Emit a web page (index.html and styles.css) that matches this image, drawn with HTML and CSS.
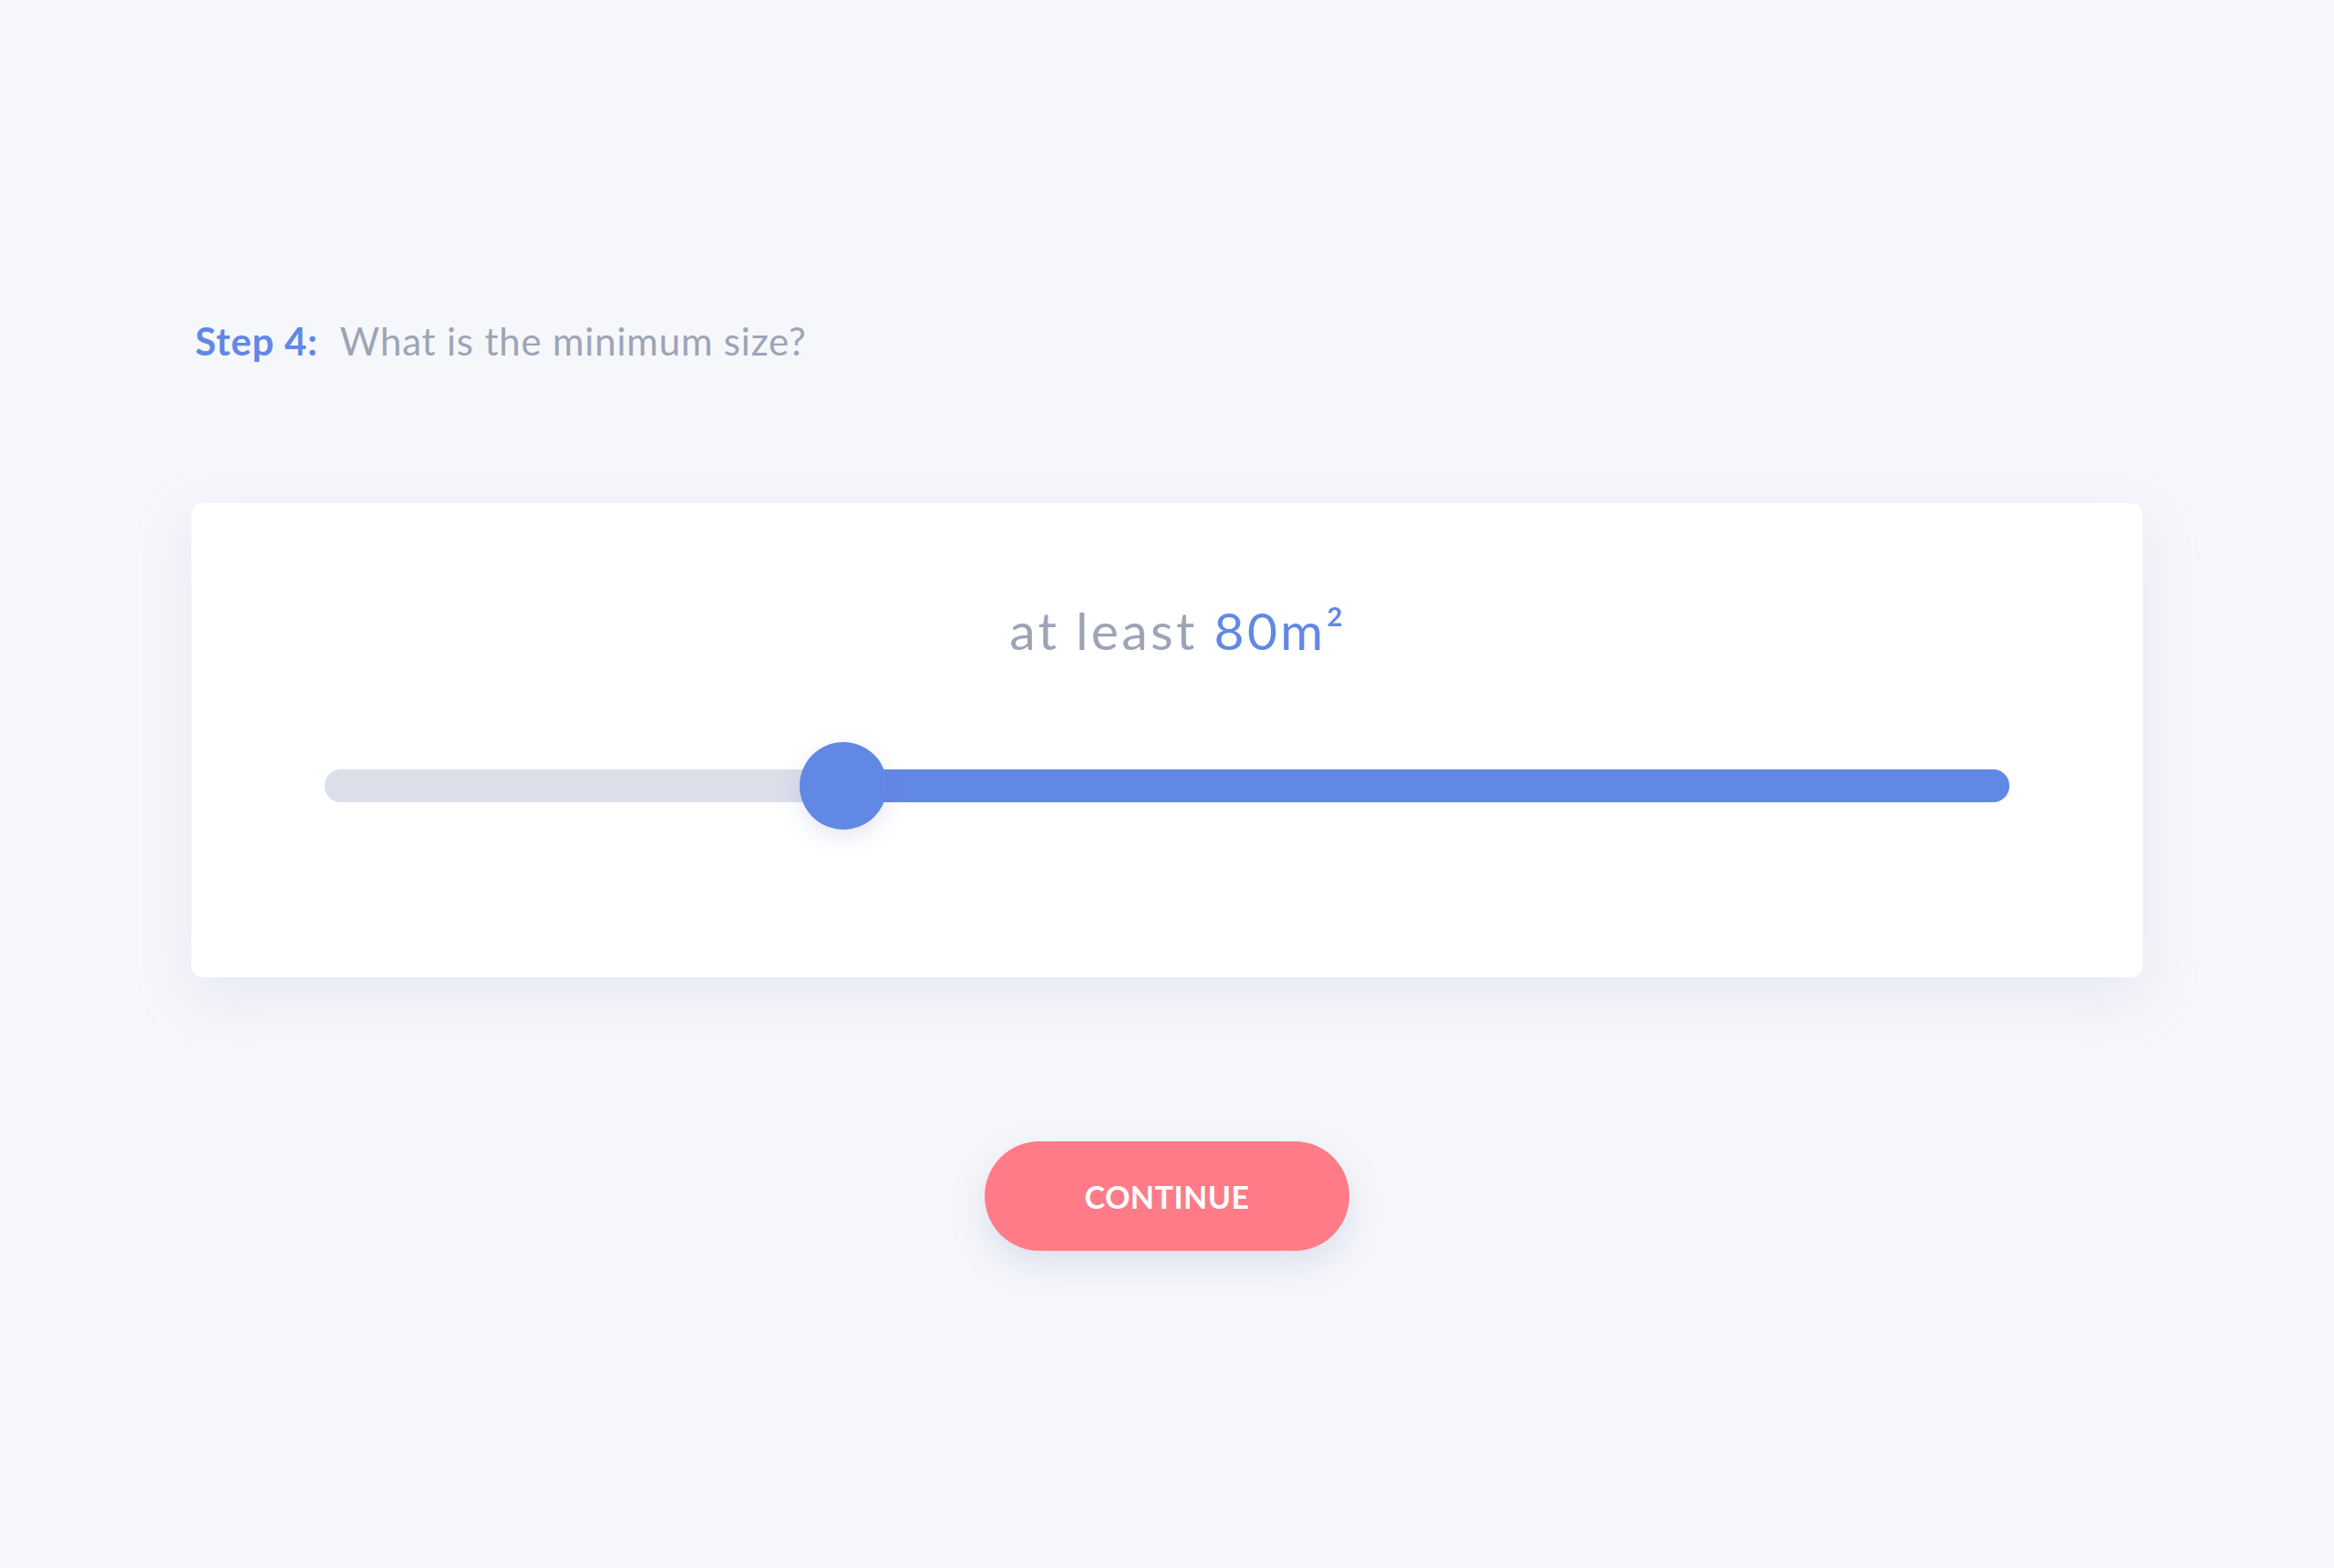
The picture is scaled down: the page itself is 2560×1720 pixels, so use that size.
FILE: index.html
```html
<!DOCTYPE html>
<html lang="en">
<head>
<meta charset="utf-8">
<title>Step 4</title>
<link rel="stylesheet" href="styles.css">
</head>
<body>
<main class="page">
  <h1 class="question"><span class="step">Step 4:</span><span class="prompt">What is the minimum size?</span></h1>
  <section class="card">
    <div class="value">at least <span class="amount">80m²</span></div>
    <div class="slider">
      <div class="track">
        <div class="fill" style="left: 30.8%;"></div>
        <div class="thumb" style="left: 30.8%;"></div>
      </div>
    </div>
  </section>
  <div class="actions">
    <button class="continue" type="button">CONTINUE</button>
  </div>
</main>
</body>
</html>
```
FILE: styles.css
```css
html, body {
  margin: 0;
  padding: 0;
  background: #f6f7fb;
}
body {
  font-family: "Lato", "Open Sans", sans-serif;
  width: 2560px;
  height: 1720px;
}
.page {
  padding: 344px 210px 0 210px;
}
.question {
  margin: 0 0 0 4px;
  font-size: 42px;
  line-height: 60px;
  font-weight: 400;
  letter-spacing: 0.8px;
  display: flex;
  gap: 24px;
}
.step {
  color: #6288e5;
  font-weight: 700;
}
.prompt {
  color: #9da4b6;
}
.card {
  margin-top: 148px;
  background: #ffffff;
  border-radius: 12px;
  box-shadow: 0 20px 60px rgba(190, 196, 220, 0.28);
  padding: 104px 146px 162px;
}
.value {
  text-align: center;
  font-size: 57px;
  line-height: 70px;
  letter-spacing: 3.3px;
  color: #9da4b6;
  padding-left: 24px;
}
.amount {
  color: #6288e5;
}
.slider {
  margin-top: 88px;
  height: 96px;
  display: flex;
  align-items: center;
}
.track {
  position: relative;
  width: 100%;
  height: 36px;
  border-radius: 18px;
  background: #dadfea;
}
.fill {
  position: absolute;
  top: 0;
  right: 0;
  bottom: 0;
  border-radius: 0 18px 18px 0;
  background: #6288e5;
}
.thumb {
  position: absolute;
  top: 50%;
  width: 96px;
  height: 96px;
  margin: -48px 0 0 -48px;
  border-radius: 50%;
  background: #6288e5;
  box-shadow: 0 8px 24px rgba(98, 120, 190, 0.18);
}
.actions {
  margin-top: 180px;
  display: flex;
  justify-content: center;
}
.continue {
  width: 400px;
  height: 120px;
  border: none;
  border-radius: 60px;
  background: #ff7b88;
  color: #ffffff;
  font-family: "Lato", "Open Sans", sans-serif;
  font-size: 34px;
  font-weight: 700;
  letter-spacing: 0.5px;
  box-shadow: 0 14px 34px rgba(170, 180, 210, 0.35);
  cursor: pointer;
}
```
